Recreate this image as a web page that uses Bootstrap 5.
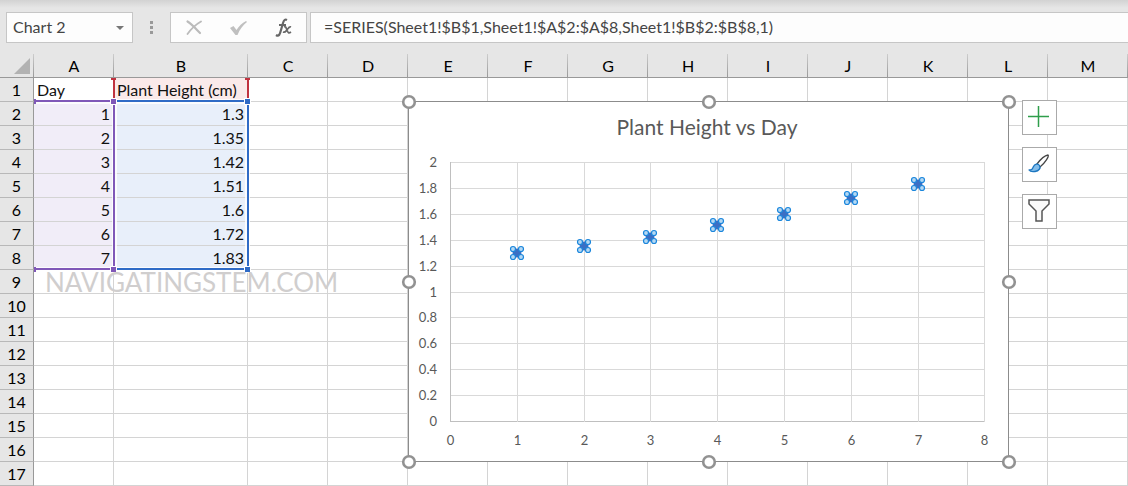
<!DOCTYPE html>
<html lang="en">
<head>
<meta charset="utf-8">
<meta name="viewport" content="width=device-width, initial-scale=1">
<title>Plant Height vs Day</title>
<link rel="stylesheet" href="https://cdn.jsdelivr.net/npm/bootstrap@5.3.0/dist/css/bootstrap.min.css">
<style>
body { font-family: Lato, sans-serif; font-size: 16px; line-height: 23px; color: #111; background: #fff; }
.formula-bar { height: 54px; padding: 12px 0 11px 6px; background: linear-gradient(#d2d2d2, #e6e6e6 8px); }
.fbox { height: 31px; border: 1px solid #c6c6c6; background-color: #fdfdfd; color: #444; font-size: 16px; line-height: 23px; }
.name-box { width: 127px; padding: 2px 20px 4px 6px; background: #fdfdfd url("data:image/svg+xml,%3Csvg xmlns='http://www.w3.org/2000/svg' width='8' height='4'%3E%3Cpath d='M0 0h8L4 4z' fill='%23777'/%3E%3C/svg%3E") no-repeat right 8px center; background-size: 8px 4px; }
.grip { width: 37px; }
.fx-group { width: 137px; margin-right: 3px; }
.fx-group button { width: 45px; border: 0; padding: 0; background: none; }
.fx-group svg { display: block; margin: auto; }
.formula-input { border-right: 0; padding: 0 0 2px 13px; min-width: 0; }
.sheet { table-layout: fixed; border-collapse: separate; border-spacing: 0; width: 100%; }
.sheet th, .sheet td { height: 24px; padding: 1px 3px 0; border: 0 solid #d4d4d4; border-width: 0 1px 1px 0; line-height: 22px; font-weight: 400; white-space: nowrap; text-align: right; }
.sheet thead th { padding: 0; text-align: center; background: #e6e6e6 linear-gradient(#ccc, #999) no-repeat right top / 1px 100%; border-bottom-color: #999; border-right: 0; color: #000; }
.sheet thead th:first-child { line-height: 0; vertical-align: bottom; padding: 0 4px 3px 0; text-align: right; }
.sheet tbody th { text-align: center; padding: 1px 0 0; background: #e6e6e6; border-right-color: #999; border-bottom-color: #b8b8b8; color: #000; }
.sheet td.txt { text-align: left; }
.sheet td.days { background: #f1edf8; }
.sheet td.heights { background: #e8effa; }
.sheet td.series-name { background: #faeaea; }
.marks { left: 34px; top: 24px; pointer-events: none; overflow: visible; }
.watermark { left: 45px; top: 213px; font-size: 26px; line-height: 30px; color: #d0cece; }
.chart { left: 408px; top: 47px; }
.chart svg { display: block; overflow: visible; }
.chart text { fill: #595959; font-size: 13px; text-anchor: middle; }
.chart .ylabel { text-anchor: end; }
.chart .chart-title { font-size: 21px; }
.chart-tools { left: 1022px; top: 46px; gap: 12px; }
.chart-tools button { width: 35px; height: 35px; padding: 0 2px 2px 0; border: 1px solid #aaa; background: #fff; }
.chart-tools svg { display: block; margin: auto; }
</style>
</head>
<body>
<header class="formula-bar d-flex">
  <select class="fbox name-box form-select rounded-0" aria-label="Name box"><option>Chart 2</option></select>
  <div class="grip d-flex align-items-center justify-content-center">
    <svg width="3" height="13" fill="#999"><path d="M0 0h3v3H0zM0 5h3v3H0zM0 10h3v3H0z"/></svg>
  </div>
  <div class="fbox fx-group d-flex">
    <button type="button" aria-label="Cancel"><svg width="16" height="16" fill="none" stroke="#bbb" stroke-linecap="round"><path d="M1.500 1.500C6 4 10 9 14 13" stroke-width="2.200"/><path d="M15 1.500C9 5 5 9 1.500 14" stroke-width="1.800"/></svg></button>
    <button type="button" aria-label="Enter"><svg width="18" height="16" fill="#c0c0c0"><path d="M0 8l3.500-2L6.500 10C9 6 12 3 16 1l1 1C13 5 10 9 7.500 15H5.500z"/></svg></button>
    <button type="button" aria-label="Insert function"><svg width="18" height="20" fill="none" stroke="#666"><path d="M1 17c3 2 4-1 5-5l2-7c1-3 2-4 4-3M4 7h7" stroke-width="2.200"/><path d="M9 9c2-1 2 1 3 3s1 4 4 2M16 9c-2-1-3 2-4 3s-2 3-4 2" stroke-width="1.700"/></svg></button>
  </div>
  <input class="fbox formula-input flex-grow-1" aria-label="Formula" value="=SERIES(Sheet1!$B$1,Sheet1!$A$2:$A$8,Sheet1!$B$2:$B$8,1)">
</header>
<main class="position-relative">
  <table class="sheet" id="sheet"></table>
  <svg class="marks position-absolute" width="216" height="195">
    <g fill="#fff"><path d="M0 21h78v5H0zM78 26h5v164h-5zM0 189h78v4H0zM80 21h132v5H80zM211 24h5v166h-5zM80 189h132v4H80z" fill-opacity=".8"/></g>
    <path d="M0 23h78M80 25v164M0 191h78" stroke="#8058b8" stroke-width="2" fill="none"/>
    <path d="M82 23h130M214 25v164M82 191h130" stroke="#2f6bc6" stroke-width="2" fill="none"/>
    <path d="M77 0h5v2h-1v18h-2V2h-2zM211 0h5v2h-1v18h-2V2h-2z" fill="#c0323f"/>
    <path d="M76 20h7v7h-7zM76 188h7v7h-7zM210 20h7v7h-7zM210 188h7v7h-7z" fill="#fff"/>
    <path d="M77 21h5v5h-5zM77 189h5v5h-5zM0 21h2v5H0zM0 189h2v5H0z" fill="#8058b8"/>
    <path d="M211 21h5v5h-5zM211 189h5v5h-5z" fill="#2f6bc6"/>
  </svg>
  <div class="watermark position-absolute">NAVIGATINGSTEM.COM</div>
  <section class="chart position-absolute" aria-label="Plant Height vs Day"><svg width="601" height="361" id="chart"></svg></section>
  <div class="chart-tools position-absolute d-flex flex-column">
    <button type="button" aria-label="Chart elements"><svg width="21" height="21" stroke="#2f9e4b" stroke-width="1.500"><path d="M0 10.500h21M10.500 0v21"/></svg></button>
    <button type="button" aria-label="Chart styles"><svg width="22" height="20" stroke-linejoin="round"><path d="M9 10C12 6 17 1.500 20 1c1.500 1-3 8-8 12z" fill="#fff" stroke="#444" stroke-width="1.300"/><path d="M1 16c3 0 3.500-1 4.500-3.500 1-2.500 4.500-3.500 6-1s-.5 5.500-4.500 6c-2 .3-5 0-6-1.500z" fill="#83bdea" stroke="#1b76c0" stroke-width="1.300"/></svg></button>
    <button type="button" aria-label="Chart filters"><svg width="22" height="23"><path d="M1 1h20v4l-7 7v10H8V12L1 5z" fill="#fafafa" stroke="#555" stroke-width="1.500"/></svg></button>
  </div>
</main>
<script src="https://cdn.jsdelivr.net/npm/bootstrap@5.3.0/dist/js/bootstrap.bundle.min.js"></script>
<script>
const heights = ['1.3', '1.35', '1.42', '1.51', '1.6', '1.72', '1.83'];

// worksheet grid
const cols = 'ABCDEFGHIJKLM'.split('');
const corner = '<svg width="16" height="16"><path d="M16 0v16H0z" fill="#b2b2b2"/></svg>';
let html = '<colgroup><col style="width:34px"><col style="width:80px"><col style="width:134px">' + '<col>'.repeat(11) +
  `</colgroup><thead><tr><th>${corner}</th>` + cols.map(c => `<th>${c}</th>`).join('') + '</tr></thead><tbody>';
for (let r = 1; r <= 17; r++) {
  let a = '<td></td>', b = '<td></td>';
  if (r === 1) { a = '<td class="txt">Day</td>'; b = '<td class="txt series-name">Plant Height (cm)</td>'; }
  else if (r <= 8) { a = `<td class="days">${r - 1}</td>`; b = `<td class="heights">${heights[r - 2]}</td>`; }
  html += `<tr><th>${r}</th>${a}${b}${'<td></td>'.repeat(11)}</tr>`;
}
document.getElementById('sheet').innerHTML = html + '</tbody>';

// scatter chart
const px = d => Math.round(42 + d * 66.8) + .5;
const py = v => Math.round(320 - v * 129.5) + .5;
let s = '<rect x=".5" y=".5" width="600" height="360" fill="#fff" stroke="#8c8c8c"/>';
for (let i = 0; i <= 10; i++) {
  const v = i / 5;
  s += `<path d="M42 ${py(v)}H577" stroke="${i ? '#d9d9d9' : '#bfbfbf'}"/><text class="ylabel" x="29" y="${py(v) + 4}">${v}</text>`;
}
for (let d = 0; d <= 8; d++)
  s += `<path d="M${px(d)} 61V321" stroke="${d ? '#d9d9d9' : '#bfbfbf'}"/><text x="${px(d)}" y="344">${d}</text>`;
heights.forEach((v, i) => {
  const x = px(i + 1) - .5, y = Math.round(320 - v * 129.5);
  s += `<circle cx="${x}" cy="${y}" r="4.500" fill="#3a6fc4"/><g fill="#b5d8f3" stroke="#1a86dc" stroke-width="1.2">` +
    [[-4, -4], [4, -4], [-4, 4], [4, 4]].map(([a, b]) => `<circle cx="${x + a}" cy="${y + b}" r="2.5"/>`).join('') + '</g>';
});
s += '<text class="chart-title" x="299" y="34">Plant Height vs Day</text>';
for (const [x, y] of [[0, 0], [300, 0], [600, 0], [0, 180], [600, 180], [0, 360], [300, 360], [600, 360]])
  s += `<circle cx="${x + 1}" cy="${y + 1}" r="5.800" fill="#fff" stroke="#929292" stroke-width="2.600"/>`;
document.getElementById('chart').innerHTML = s;
</script>
</body>
</html>
